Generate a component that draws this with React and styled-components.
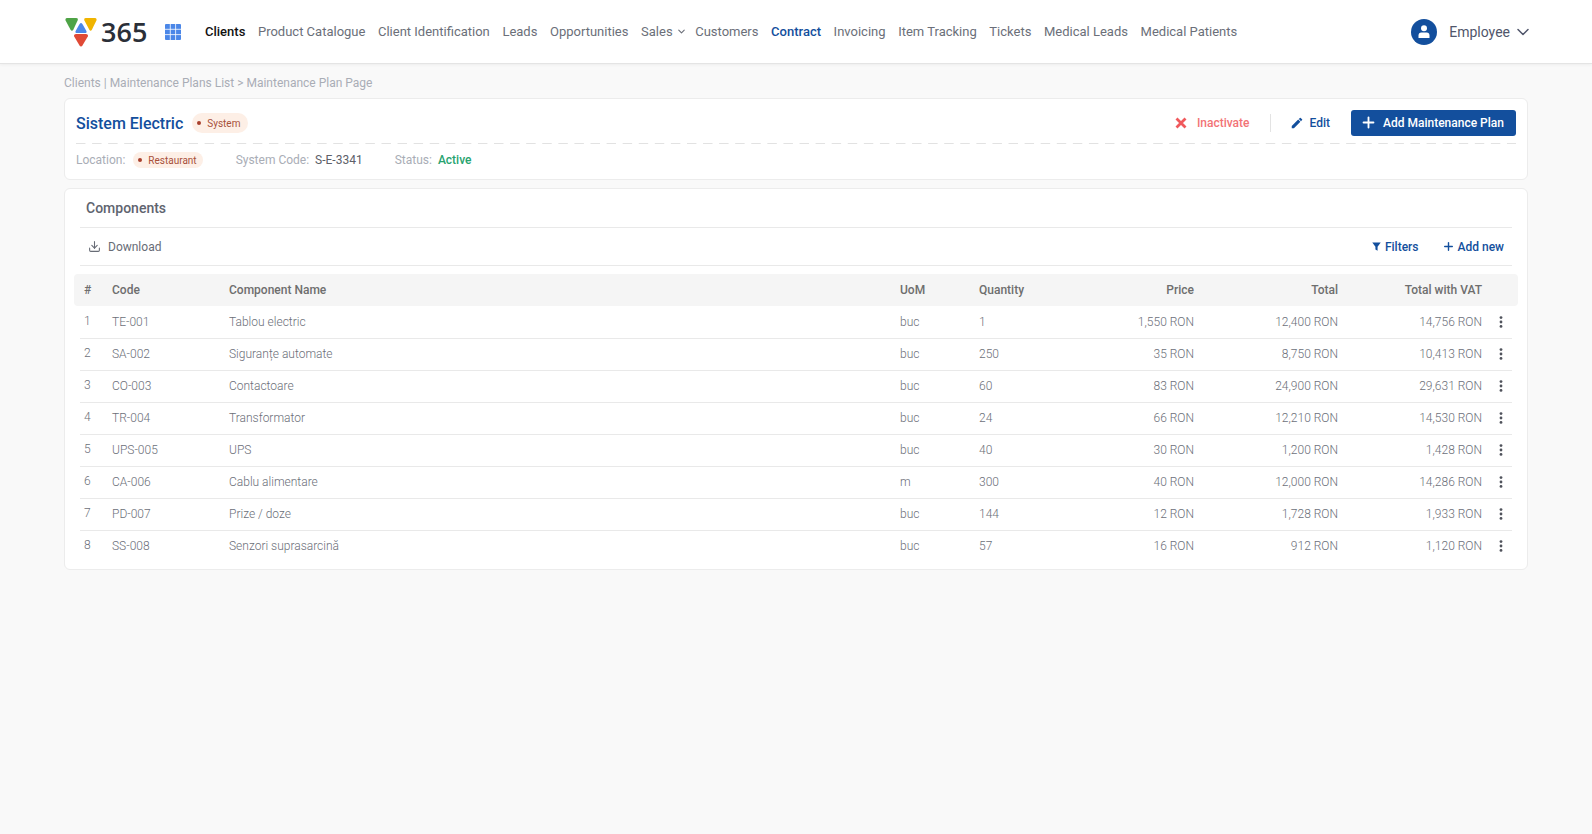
import React from 'react';
import styled, { createGlobalStyle } from 'styled-components';
import { ChevronDown, Download, Plus } from 'lucide-react';

const GlobalStyle = createGlobalStyle`
  html, body {
    margin: 0;
    padding: 0;
    background: #f9f9f9;
    font-family: Roboto, "Liberation Sans", sans-serif;
  }
  * { box-sizing: border-box; }
`;

const Page = styled.div`
  min-height: 834px;
  background: #f9f9f9;
`;

const Header = styled.header`
  height: 64px;
  background: #fff;
  border-bottom: 1px solid #e4e4e4;
  box-shadow: 0 1px 3px rgba(0, 0, 0, 0.05);
  display: flex;
  align-items: center;
  padding: 0 64px 0 65px;
`;

const LogoMark = styled.div`
  display: flex;
  align-items: center;
  gap: 4px;
  width: 84px;
  flex: none;
`;

const LogoText = styled.span`
  font-family: "Open Sans", Roboto, sans-serif;
  font-size: 27px;
  font-weight: 600;
  color: #2b2f38;
  line-height: 1;
`;

const AppsButton = styled.svg`
  width: 16px;
  height: 16px;
  margin-left: 16px;
  flex: none;
`;

const Nav = styled.nav`
  display: flex;
  align-items: center;
  gap: 12.6px;
  margin-left: 24px;
`;

const NavItem = styled.a`
  display: flex;
  align-items: center;
  gap: 3px;
  font-size: 13px;
  white-space: nowrap;
  font-weight: ${p => (p.$active || p.$current ? 500 : 400)};
  color: ${p => (p.$active ? '#111' : p.$current ? '#134f9d' : '#6b6f79')};
`;

const SalesChevron = styled(ChevronDown)`
  margin-right: -4px;
`;

const UserMenu = styled.div`
  margin-left: auto;
  display: flex;
  align-items: center;
  color: #50566b;
  font-size: 14px;
`;

const Avatar = styled.div`
  width: 26px;
  height: 26px;
  border-radius: 50%;
  background: #134f9d;
  display: flex;
  align-items: center;
  justify-content: center;
  margin-right: 12px;
`;

const UserName = styled.span`
  margin-right: 3px;
`;

const UserChevron = styled(ChevronDown)`
  margin-right: -5px;
`;

const Main = styled.main`
  padding: 12px 64px 0;
`;

const Breadcrumb = styled.div`
  font-size: 12px;
  line-height: 15px;
  color: #a9adb6;
  margin-bottom: 7px;
`;

const Card = styled.section`
  background: #fff;
  border: 1px solid #ececec;
  border-radius: 6px;
`;

const PlanCard = styled(Card)`
  height: 82px;
  padding: 0 11px;
  margin-bottom: 8px;
`;

const PlanTop = styled.div`
  height: 45px;
  padding-top: 2px;
  display: flex;
  align-items: center;
  background-image: linear-gradient(to right, #e2e2e2 9px, transparent 9px);
  background-size: 16.08px 1px;
  background-repeat: repeat-x;
  background-position: left bottom;
`;

const Title = styled.h1`
  margin: 1px 9px 0 0;
  font-size: 16px;
  font-weight: 500;
  color: #134f9d;
`;

const Tag = styled.span`
  display: inline-flex;
  align-items: center;
  gap: 6px;
  border-radius: 10px;
  background: #fdefe6;
  color: #a8503a;
  font-size: 10px;
  &::before {
    content: '';
    width: 4px;
    height: 4px;
    border-radius: 50%;
    background: #a8402e;
  }
`;

const TitleTag = styled(Tag)`
  height: 20px;
  margin-top: 1px;
  padding: 0 8px 0 5px;
`;

const MetaTag = styled(Tag)`
  height: 16px;
  margin: 0 1px 0 2px;
  padding: 0 6px 0 5px;
`;

const Actions = styled.div`
  margin-left: auto;
  display: flex;
  align-items: center;
`;

const InactivateButton = styled.span`
  display: flex;
  align-items: center;
  gap: 10px;
  font-size: 12px;
  font-weight: 500;
  color: #f27376;
  padding-right: 20px;
  border-right: 1px solid #e3e3e3;
  height: 18px;
`;

const EditButton = styled.span`
  display: flex;
  align-items: center;
  gap: 6px;
  font-size: 12px;
  font-weight: 500;
  color: #134f9d;
  margin: 0 21px 0 19px;
`;

const PrimaryButton = styled.button`
  display: flex;
  align-items: center;
  gap: 6px;
  height: 26px;
  width: 165px;
  padding: 0 0 0 9px;
  border: 0;
  border-radius: 3px;
  background: #134f9d;
  color: #fff;
  font: 500 12px Roboto, sans-serif;
`;

const MetaRow = styled.div`
  height: 32px;
  display: flex;
  align-items: center;
  font-size: 12px;
`;

const MetaItem = styled.div`
  display: flex;
  align-items: center;
  gap: 6px;
  margin-right: 32px;
`;

const MetaLabel = styled.span`
  color: #a9adb6;
`;

const MetaValue = styled.span`
  color: ${p => p.$color || '#5d6069'};
  font-weight: ${p => p.$weight || 400};
`;

const ComponentsCard = styled(Card)`
  padding: 0 9px 6px;
`;

const CardTitle = styled.div`
  height: 39px;
  margin: 0 6px;
  padding-left: 6px;
  display: flex;
  align-items: center;
  font-size: 14px;
  font-weight: 500;
  color: #60646f;
  border-bottom: 1px solid #e9e9e9;
`;

const Toolbar = styled.div`
  height: 38px;
  margin: 0 6px;
  padding: 0 8px;
  display: flex;
  align-items: center;
  border-bottom: 1px solid #e9e9e9;
`;

const DownloadLink = styled.span`
  display: flex;
  align-items: center;
  gap: 7px;
  font-size: 12px;
  color: #686c76;
`;

const FilterLink = styled.span`
  display: flex;
  align-items: center;
  gap: 4px;
  margin-left: auto;
  font-size: 12px;
  font-weight: 500;
  color: #134f9d;
`;

const AddLink = styled.span`
  display: flex;
  align-items: center;
  gap: 3px;
  margin-left: 23px;
  font-size: 12px;
  font-weight: 500;
  color: #134f9d;
`;

const Grid = styled.div`
  display: grid;
  grid-template-columns: 28px 117px 671px 79px 100px 115px 144px 144px 30px;
  align-items: center;
`;

const HeadRow = styled(Grid)`
  height: 32px;
  margin: 8px 0 1px;
  padding-left: 10px;
  padding-right: 6px;
  background: #f5f5f5;
  border-radius: 4px;
  font-size: 12px;
  font-weight: 500;
  color: #6e6e6e;
`;

const BodyRow = styled(Grid)`
  height: 32px;
  margin: 0 6px;
  padding: 0 0 2px 4px;
  font-size: 12px;
  font-weight: 300;
  color: #6c6f79;
  border-bottom: 1px solid ${p => (p.$last ? 'transparent' : '#e9e9e9')};
`;

const Cell = styled.div`
  text-align: ${p => (p.$right ? 'right' : 'left')};
  white-space: nowrap;
`;

const IndexCell = styled(Cell)`
  padding-bottom: 2px;
`;

const Dots = styled.svg`
  width: 4px;
  height: 12px;
  justify-self: center;
  margin-left: 8px;
`;

const rows = [
  ['TE-001', 'Tablou electric', 'buc', '1', '1,550 RON', '12,400 RON', '14,756 RON'],
  ['SA-002', 'Siguranțe automate', 'buc', '250', '35 RON', '8,750 RON', '10,413 RON'],
  ['CO-003', 'Contactoare', 'buc', '60', '83 RON', '24,900 RON', '29,631 RON'],
  ['TR-004', 'Transformator', 'buc', '24', '66 RON', '12,210 RON', '14,530 RON'],
  ['UPS-005', 'UPS', 'buc', '40', '30 RON', '1,200 RON', '1,428 RON'],
  ['CA-006', 'Cablu alimentare', 'm', '300', '40 RON', '12,000 RON', '14,286 RON'],
  ['PD-007', 'Prize / doze', 'buc', '144', '12 RON', '1,728 RON', '1,933 RON'],
  ['SS-008', 'Senzori suprasarcină', 'buc', '57', '16 RON', '912 RON', '1,120 RON'],
];

const navItems = ['Product Catalogue', 'Client Identification', 'Leads', 'Opportunities'];
const navItemsAfter = ['Invoicing', 'Item Tracking', 'Tickets', 'Medical Leads', 'Medical Patients'];

function Logo() {
  return (
    <LogoMark>
      <svg width="32" height="30" viewBox="0 0 32 30">
        <path d="M0.6 3.4Q-0.2 1 2.4 1H11Q13.6 1 12.6 3.4L8.4 12.4Q7 15 5.4 12.4Z" fill="#4ea346" />
        <path d="M19.4 3.4Q18.6 1 21 1H29.6Q32.2 1 31.4 3.4L27 12.4Q25.6 15 24.2 12.4Z" fill="#f0b400" />
        <path d="M14.6 7Q16 5.2 17.4 7L21.4 14Q22.2 16 20 16H12Q9.8 16 10.6 14Z" fill="#4b87e8" />
        <path d="M9.2 19.6Q8.4 17 11 17H21Q23.6 17 22.8 19.6L17.6 28.2Q16 30.6 14.4 28.2Z" fill="#e04a36" />
      </svg>
      <LogoText>365</LogoText>
    </LogoMark>
  );
}

function AppsIcon() {
  return (
    <AppsButton viewBox="0 0 16 16">
      <rect width="16" height="16" rx="1" fill="#4b87e8" />
      <path d="M5.3 0V16M10.6 0V16M0 5.3H16M0 10.6H16" stroke="#fff" strokeWidth="0.8" />
    </AppsButton>
  );
}

export default function App() {
  return (
    <Page>
      <GlobalStyle />
      <Header>
        <Logo />
        <AppsIcon />
        <Nav>
          <NavItem $active>Clients</NavItem>
          {navItems.map(n => <NavItem key={n}>{n}</NavItem>)}
          <NavItem>Sales <SalesChevron size={11} strokeWidth={2.4} /></NavItem>
          <NavItem>Customers</NavItem>
          <NavItem $current>Contract</NavItem>
          {navItemsAfter.map(n => <NavItem key={n}>{n}</NavItem>)}
        </Nav>
        <UserMenu>
          <Avatar>
            <svg width="12" height="13" viewBox="0 0 12 13" fill="#fff">
              <circle cx="6" cy="3.2" r="3" />
              <path d="M0.5 13V10.5Q0.5 7.6 3.4 7.6H8.6Q11.5 7.6 11.5 10.5V13Z" />
            </svg>
          </Avatar>
          <UserName>Employee</UserName>
          <UserChevron size={20} strokeWidth={1.8} />
        </UserMenu>
      </Header>
      <Main>
        <Breadcrumb>Clients | Maintenance Plans List &gt; Maintenance Plan Page</Breadcrumb>
        <PlanCard>
          <PlanTop>
            <Title>Sistem Electric</Title>
            <TitleTag>System</TitleTag>
            <Actions>
              <InactivateButton>
                <svg width="12" height="12" viewBox="0 0 12 12">
                  <path d="M1.5 1.5L10.5 10.5M10.5 1.5L1.5 10.5" stroke="#f0595c" strokeWidth="2.8" />
                </svg>
                Inactivate
              </InactivateButton>
              <EditButton>
                <svg width="14" height="14" viewBox="0 0 24 24" fill="#134f9d">
                  <path d="M3 17.25V21h3.75L17.81 9.94l-3.75-3.75L3 17.25zM20.71 7.04a1 1 0 0 0 0-1.41l-2.34-2.34a1 1 0 0 0-1.41 0l-1.83 1.83 3.75 3.75 1.83-1.83z" />
                </svg>
                Edit
              </EditButton>
              <PrimaryButton>
                <Plus size={17} strokeWidth={2.6} />
                Add Maintenance Plan
              </PrimaryButton>
            </Actions>
          </PlanTop>
          <MetaRow>
            <MetaItem>
              <MetaLabel>Location:</MetaLabel>
              <MetaTag>Restaurant</MetaTag>
            </MetaItem>
            <MetaItem>
              <MetaLabel>System Code:</MetaLabel>
              <MetaValue>S-E-3341</MetaValue>
            </MetaItem>
            <MetaItem>
              <MetaLabel>Status:</MetaLabel>
              <MetaValue $color="#27a36f" $weight={500}>Active</MetaValue>
            </MetaItem>
          </MetaRow>
        </PlanCard>
        <ComponentsCard>
          <CardTitle>Components</CardTitle>
          <Toolbar>
            <DownloadLink>
              <Download size={13} strokeWidth={2} />
              Download
            </DownloadLink>
            <FilterLink>
              <svg width="9" height="9" viewBox="0 0 10 10" fill="#134f9d">
                <path d="M0.3 0.6H9.7L6.2 5.2V9.6L3.8 8.2V5.2Z" />
              </svg>
              Filters
            </FilterLink>
            <AddLink>
              <Plus size={13} strokeWidth={2.6} />
              Add new
            </AddLink>
          </Toolbar>
          <HeadRow>
            <Cell>#</Cell>
            <Cell>Code</Cell>
            <Cell>Component Name</Cell>
            <Cell>UoM</Cell>
            <Cell>Quantity</Cell>
            <Cell $right>Price</Cell>
            <Cell $right>Total</Cell>
            <Cell $right>Total with VAT</Cell>
            <Cell />
          </HeadRow>
          {rows.map((r, i) => (
            <BodyRow key={r[0]} $last={i === rows.length - 1}>
              <IndexCell>{i + 1}</IndexCell>
              <Cell>{r[0]}</Cell>
              <Cell>{r[1]}</Cell>
              <Cell>{r[2]}</Cell>
              <Cell>{r[3]}</Cell>
              <Cell $right>{r[4]}</Cell>
              <Cell $right>{r[5]}</Cell>
              <Cell $right>{r[6]}</Cell>
              <Dots viewBox="0 0 4 12" fill="#50535c">
                <circle cx="2" cy="1.6" r="1.4" />
                <circle cx="2" cy="6" r="1.4" />
                <circle cx="2" cy="10.4" r="1.4" />
              </Dots>
            </BodyRow>
          ))}
        </ComponentsCard>
      </Main>
    </Page>
  );
}
